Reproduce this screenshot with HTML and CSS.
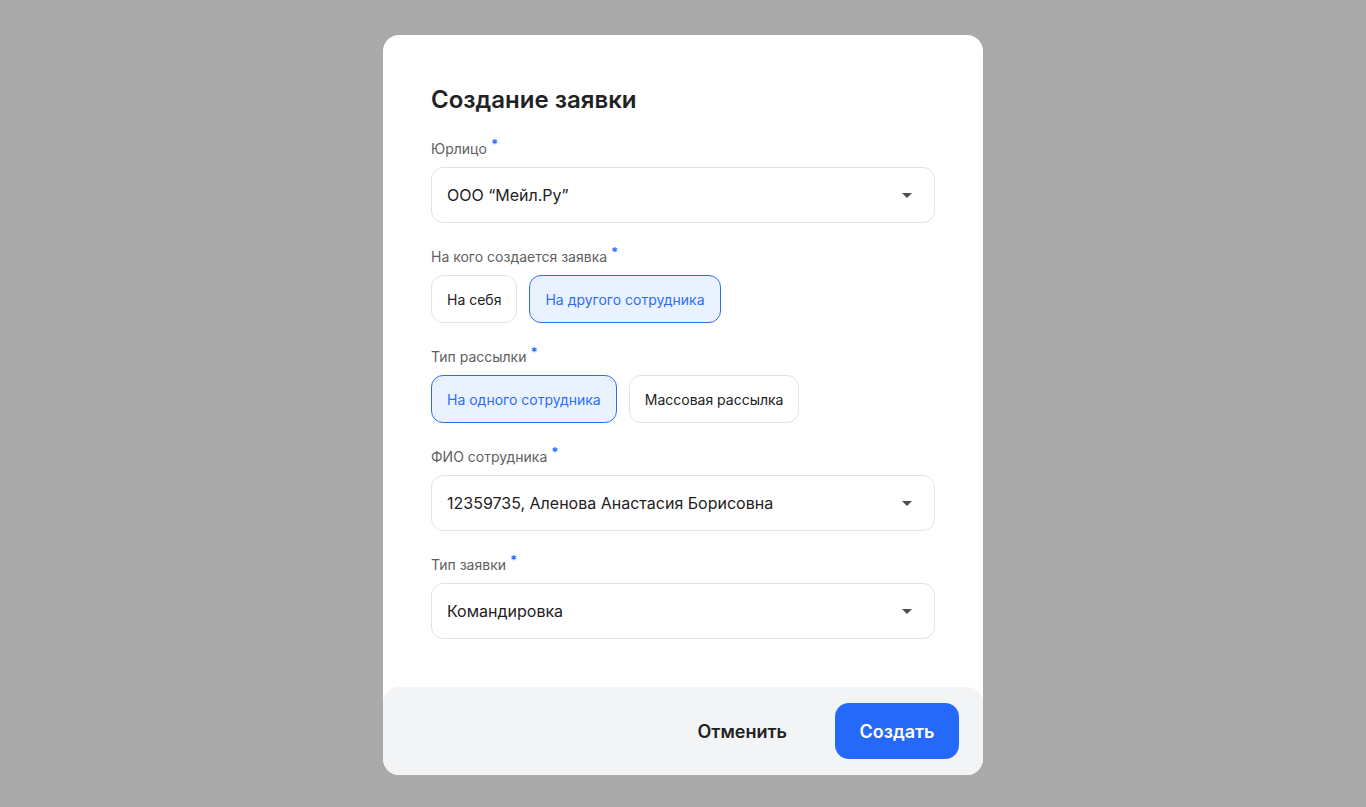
FILE: index.html
```html
<!DOCTYPE html>
<html lang="ru">
<head>
	<meta charset="utf-8">
	<title>Создание заявки</title>
	<link rel="stylesheet" href="styles.css">
</head>
<body>
<div class="overlay">
	<div class="modal">
		<div class="modal-body">
			<h1 class="title">Создание заявки</h1>

			<div class="field">
				<div class="label">Юрлицо<span class="req">*</span></div>
				<div class="select">
					<span>ООО “Мейл.Ру”</span>
					<svg class="arrow" width="10" height="5" viewBox="0 0 10 5"><path d="M0 0h10L5 5z" fill="#4d4d4d"/></svg>
				</div>
			</div>

			<div class="field">
				<div class="label">На кого создается заявка<span class="req">*</span></div>
				<div class="chips">
					<div class="chip">На себя</div>
					<div class="chip active">На другого сотрудника</div>
				</div>
			</div>

			<div class="field">
				<div class="label">Тип рассылки<span class="req">*</span></div>
				<div class="chips">
					<div class="chip active">На одного сотрудника</div>
					<div class="chip">Массовая рассылка</div>
				</div>
			</div>

			<div class="field">
				<div class="label">ФИО сотрудника<span class="req">*</span></div>
				<div class="select">
					<span>12359735, Аленова Анастасия Борисовна</span>
					<svg class="arrow" width="10" height="5" viewBox="0 0 10 5"><path d="M0 0h10L5 5z" fill="#4d4d4d"/></svg>
				</div>
			</div>

			<div class="field">
				<div class="label">Тип заявки<span class="req">*</span></div>
				<div class="select">
					<span>Командировка</span>
					<svg class="arrow" width="10" height="5" viewBox="0 0 10 5"><path d="M0 0h10L5 5z" fill="#4d4d4d"/></svg>
				</div>
			</div>
		</div>

		<div class="modal-footer">
			<button class="btn btn-cancel">Отменить</button>
			<button class="btn btn-primary">Создать</button>
		</div>
	</div>
</div>
</body>
</html>
```

FILE: styles.css
```css
*{
	box-sizing: border-box;
}
body{
	margin: 0;
	font-family: Inter, "Noto Sans", sans-serif;
	background: #aaaaaa;
	color: #222;
}
.overlay{
	height: 807px;
	display: flex;
	justify-content: center;
	padding-top: 35px;
}
.modal{
	width: 600px;
	height: 740px;
	background: #fff;
	border-radius: 16px;
	display: flex;
	flex-direction: column;
	justify-content: space-between;
}
.modal-body{
	padding: 48px 48px 0;
}
.title{
	margin: 0 0 22px;
	font-size: 24px;
	line-height: 34px;
	font-weight: 600;
	color: #222;
}
.field{
	margin-bottom: 24px;
}
.label{
	font-size: 14px;
	line-height: 20px;
	color: #5f5f5f;
	margin-bottom: 8px;
}
.req{
	color: #2b6ef5;
	font-size: 13px;
	font-weight: 700;
	position: relative;
	top: -5px;
	margin-left: 4px;
}
.select{
	height: 56px;
	border: 1px solid #e3e3e6;
	border-radius: 12px;
	padding: 0 22px 0 15px;
	display: flex;
	align-items: center;
	justify-content: space-between;
	font-size: 16px;
	color: #222;
}
.chips{
	display: flex;
	gap: 12px;
}
.chip{
	height: 48px;
	padding: 0 15px;
	border: 1px solid #e3e3e6;
	border-radius: 12px;
	display: flex;
	align-items: center;
	font-size: 14px;
	color: #222;
}
.chip.active{
	background: #ebf2ff;
	border-color: #2b6ef5;
	color: #2b6ef5;
}
.modal-footer{
	background: #f3f4f6;
	border-radius: 16px;
	height: 88px;
	padding: 16px 24px;
	display: flex;
	justify-content: flex-end;
	gap: 24px;
}
.btn{
	height: 56px;
	border: none;
	border-radius: 14px;
	font-family: inherit;
	font-size: 18px;
	font-weight: 600;
	cursor: pointer;
}
.btn-cancel{
	background: transparent;
	color: #222;
	padding: 0 24px;
}
.btn-primary{
	background: #2569fa;
	color: #fff;
	width: 124px;
}
```
